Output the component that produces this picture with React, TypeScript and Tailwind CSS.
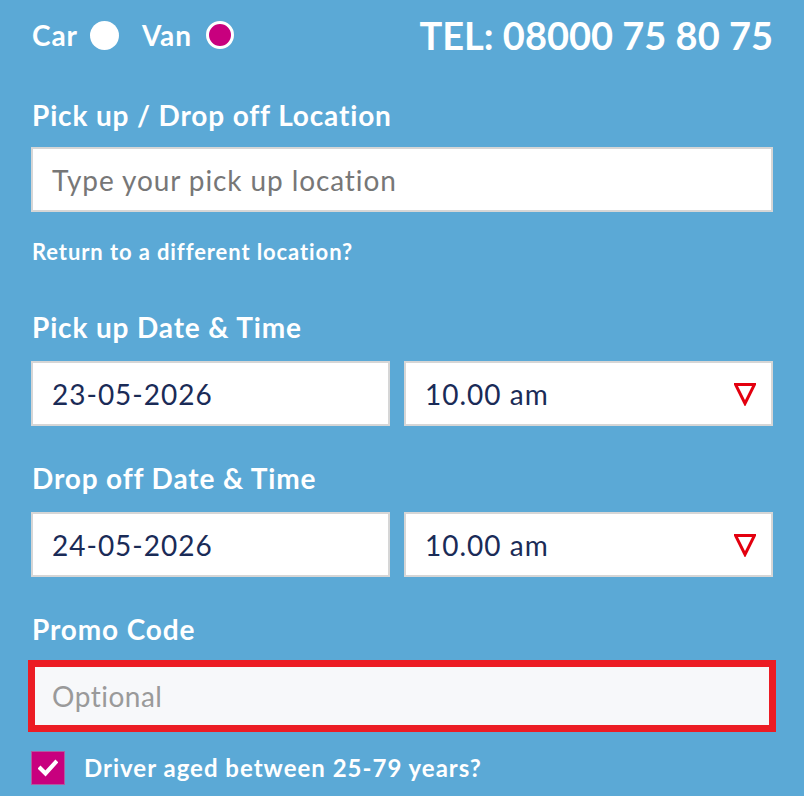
import React from 'react';

const font = { fontFamily: 'Lato, "Open Sans", sans-serif' };

const Triangle = () => (
  <svg width="22" height="24" viewBox="0 0 22 24" className="shrink-0">
    <path d="M1.5 2.5 H20.5 L11 21.5 Z" fill="none" stroke="#e3000f" strokeWidth="3" strokeLinejoin="miter" />
  </svg>
);

const Label: React.FC<{ children: React.ReactNode; className?: string }> = ({ children, className }) => (
  <div className={`h-[30px] leading-[30px] text-[28px] font-bold tracking-[0.85px] text-white pl-px ${className ?? ''}`}>
    {children}
  </div>
);

const Field: React.FC<{ value: string; select?: boolean; className?: string }> = ({ value, select, className }) => (
  <div className={`h-[65px] bg-white border-2 border-[#d6d6d6] flex items-center pl-[19px] pr-[15px] ${className ?? ''}`}>
    <span className="flex-1 text-[28px] tracking-[1px] text-[#1a2b57]">{value}</span>
    {select && <Triangle />}
  </div>
);

export default function App() {
  return (
    <div className="w-[804px] h-[796px] bg-[#5ba9d6] px-[31px] flex flex-col overflow-hidden" style={font}>
      <div className="h-[70px] flex items-center">
        <span className="text-[28px] font-bold tracking-[0.9px] text-white pl-px">Car</span>
        <span className="ml-[12px] w-[29px] h-[29px] rounded-full bg-white" />
        <span className="ml-[23px] text-[28px] font-bold tracking-[0.9px] text-white">Van</span>
        <span className="ml-[14px] w-[28px] h-[28px] rounded-full bg-[#c8007e] border-[3px] border-white" />
        <span className="ml-auto text-[38px] font-bold text-white">TEL: 08000 75 80 75</span>
      </div>

      <Label className="mt-[30px]">Pick up / Drop off Location</Label>
      <div className="mt-[17px] h-[65px] bg-white border-2 border-[#d6d6d6] flex items-center pl-[19px]">
        <span className="text-[28px] tracking-[0.9px] text-[#777777]">Type your pick up location</span>
      </div>

      <div className="mt-[28px] h-[24px] leading-[24px] text-[22px] font-bold tracking-[0.9px] text-white pl-px">
        Return to a different location?
      </div>

      <Label className="mt-[48px]">Pick up Date &amp; Time</Label>
      <div className="mt-[19px] flex gap-[14px]">
        <Field value="23-05-2026" className="w-[359px]" />
        <Field value="10.00 am" select className="flex-1" />
      </div>

      <Label className="mt-[37px]">Drop off Date &amp; Time</Label>
      <div className="mt-[19px] flex gap-[14px]">
        <Field value="24-05-2026" className="w-[359px]" />
        <Field value="10.00 am" select className="flex-1" />
      </div>

      <Label className="mt-[37px]">Promo Code</Label>
      <div className="mt-[16px] mx-[-3px] h-[72px] bg-[#f7f8fa] border-[7px] border-[#ec1c24] flex items-center pl-[17px]">
        <span className="text-[28px] tracking-[0.5px] text-[#9a9a9a]">Optional</span>
      </div>

      <div className="mt-[19px] h-[34px] flex items-center">
        <span className="w-[34px] h-[34px] bg-[#c8007e] border border-[#b05aa0] flex items-center justify-center">
          <svg width="20" height="18" viewBox="0 0 20 18">
            <path d="M2.5 9.5 L7.5 14.5 L17.5 3.5" fill="none" stroke="#ffffff" strokeWidth="4.2" strokeLinecap="square" />
          </svg>
        </span>
        <span className="ml-[19px] text-[24px] font-bold tracking-[1px] text-white">Driver aged between 25-79 years?</span>
      </div>
    </div>
  );
}
